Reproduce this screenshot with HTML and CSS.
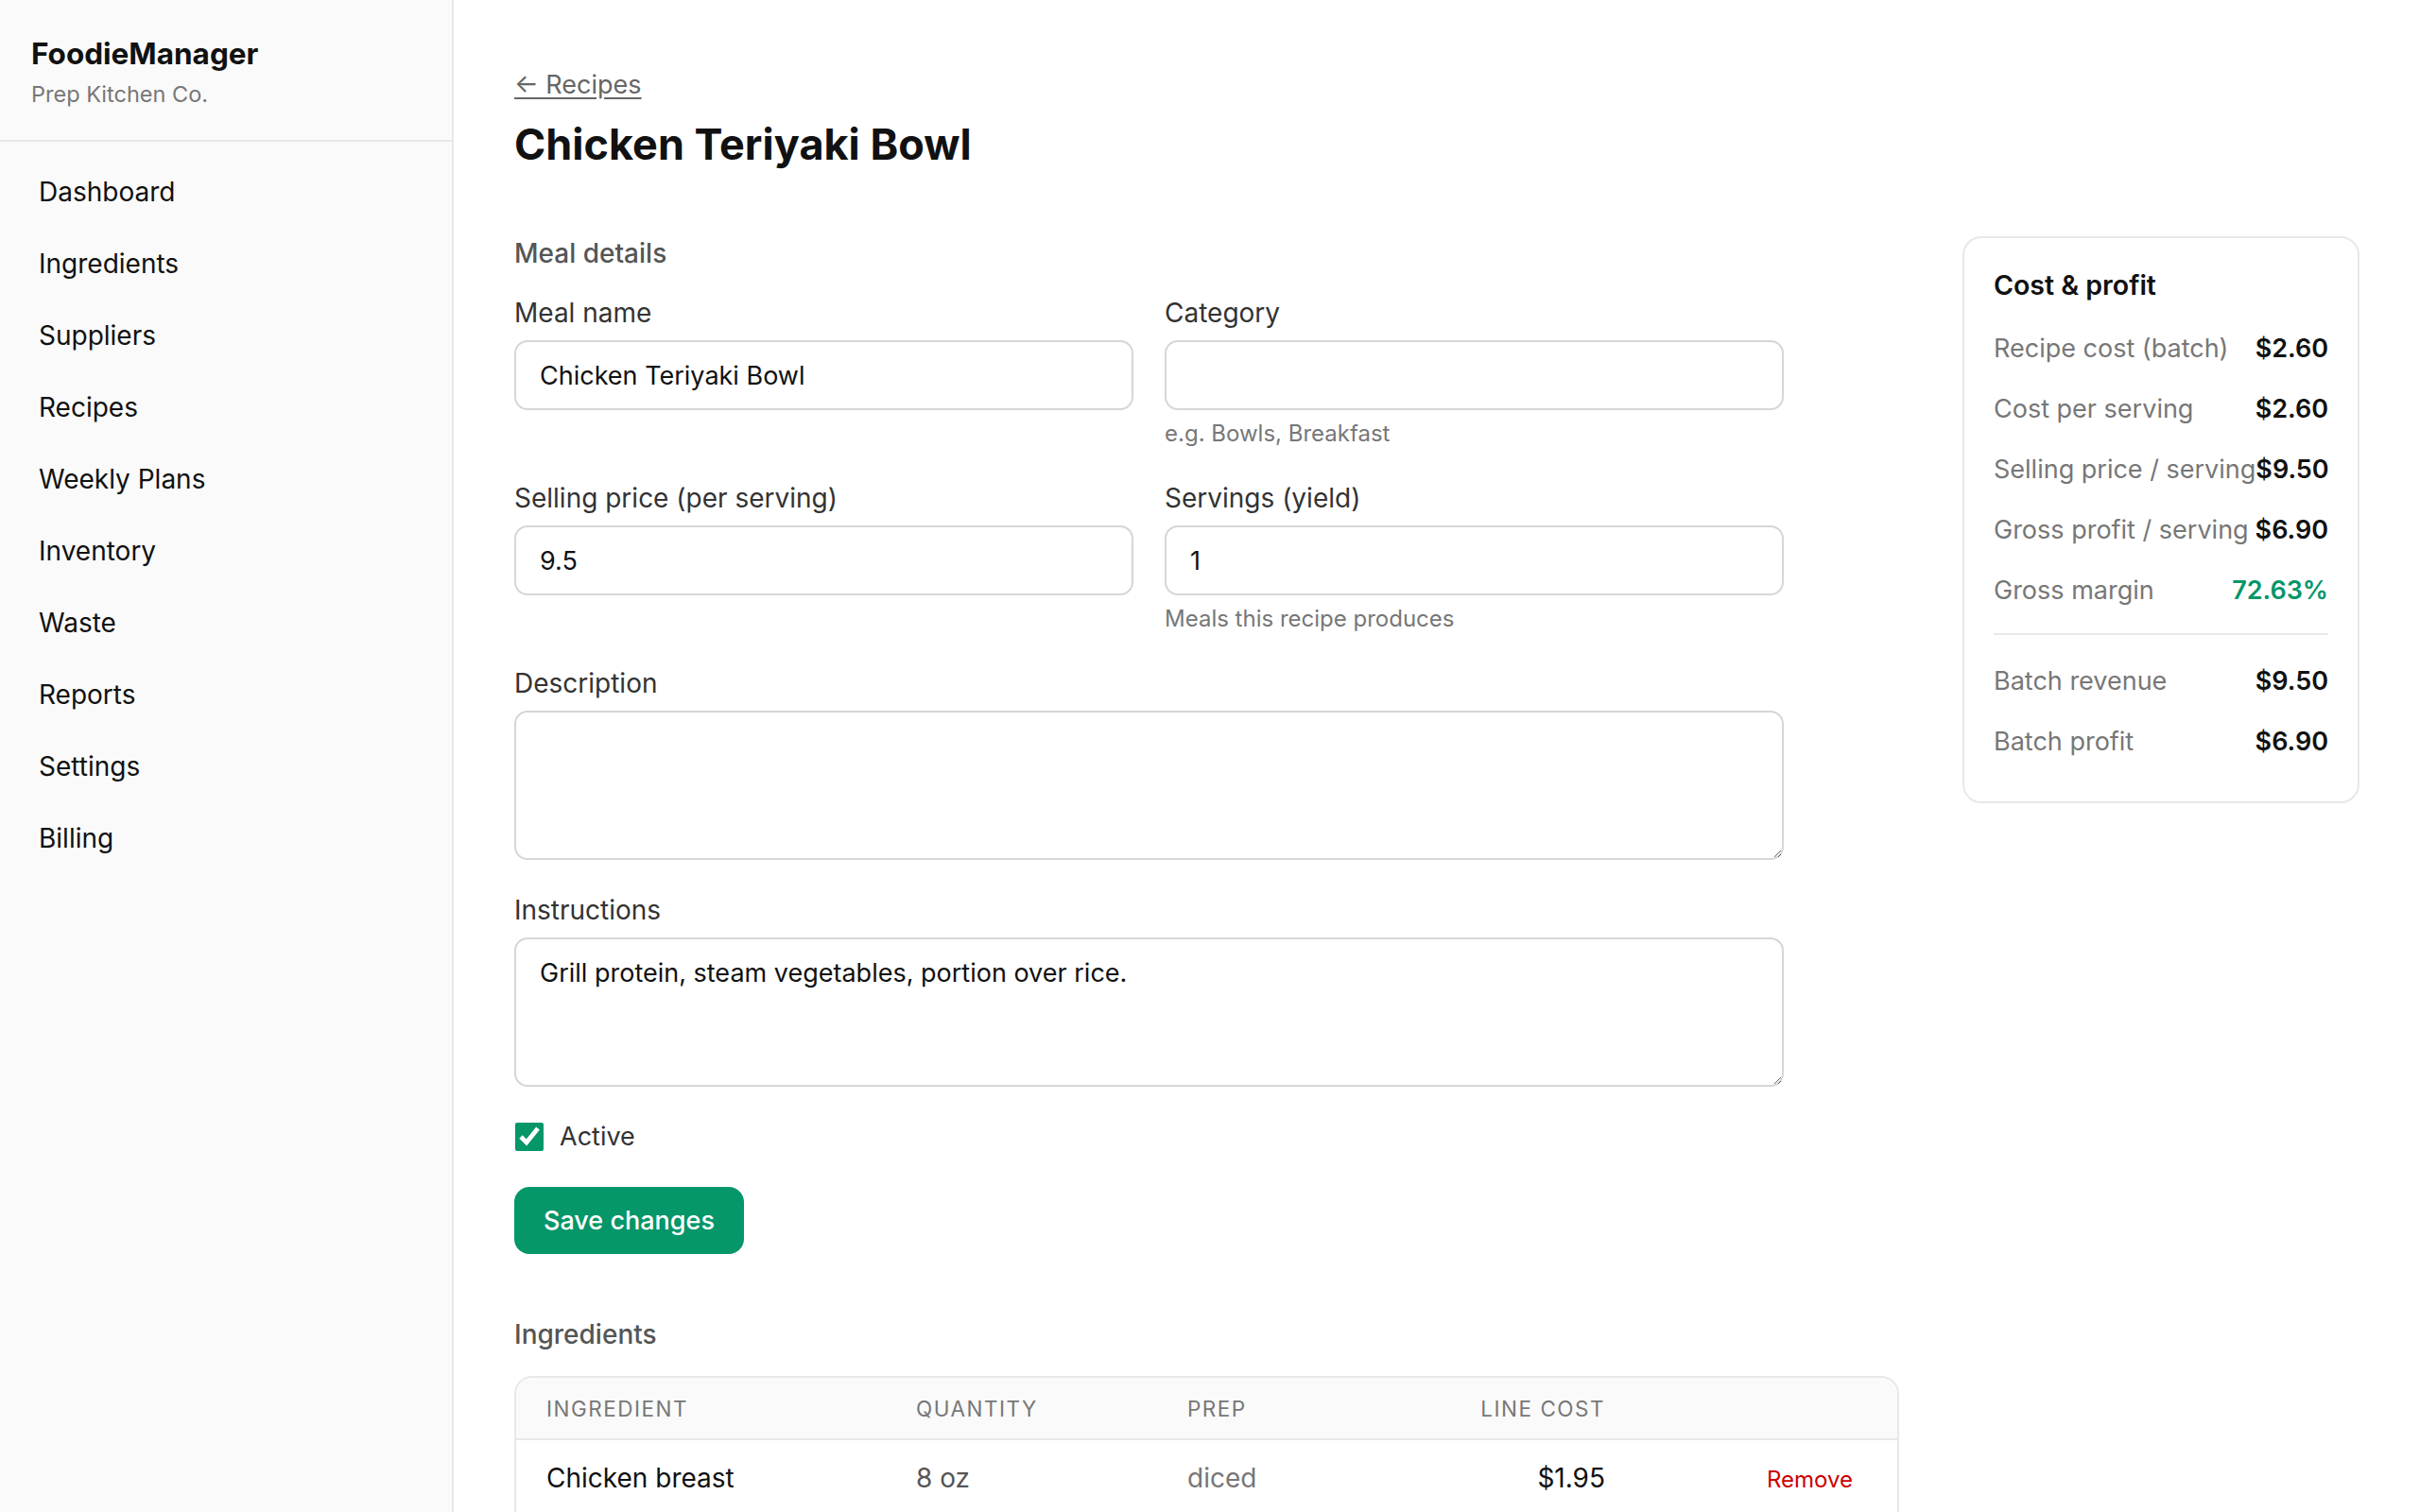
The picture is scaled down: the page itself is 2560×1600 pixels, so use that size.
FILE: index.html
```html
<!DOCTYPE html>
<html lang="en">
<head>
    <meta charset="UTF-8">
    <meta name="viewport" content="width=device-width, initial-scale=1.0">
    <title>Chicken Teriyaki Bowl - FoodieManager</title>
    <link rel="stylesheet" href="styles.css">
</head>
<body>

<!-- Sidebar -->
<aside class="sidebar">
    <div class="brand">
        <div class="brandName">FoodieManager</div>
        <div class="brandSub">Prep Kitchen Co.</div>
    </div>
    <nav class="nav">
        <a href="#">Dashboard</a>
        <a href="#">Ingredients</a>
        <a href="#">Suppliers</a>
        <a href="#">Recipes</a>
        <a href="#">Weekly Plans</a>
        <a href="#">Inventory</a>
        <a href="#">Waste</a>
        <a href="#">Reports</a>
        <a href="#">Settings</a>
        <a href="#">Billing</a>
    </nav>
</aside>

<!-- Main content -->
<main class="main">
    <a href="#" class="backLink">&larr; Recipes</a>
    <h1 class="pageTitle">Chicken Teriyaki Bowl</h1>

    <div class="layout">
        <div class="leftCol">
            <h2 class="sectionTitle">Meal details</h2>
            <form class="mealForm">
                <div class="fieldRow">
                    <div class="field">
                        <label>Meal name</label>
                        <input type="text" value="Chicken Teriyaki Bowl">
                    </div>
                    <div class="field">
                        <label>Category</label>
                        <input type="text" value="">
                        <span class="hint">e.g. Bowls, Breakfast</span>
                    </div>
                </div>
                <div class="fieldRow">
                    <div class="field">
                        <label>Selling price (per serving)</label>
                        <input type="text" value="9.5">
                    </div>
                    <div class="field">
                        <label>Servings (yield)</label>
                        <input type="text" value="1">
                        <span class="hint">Meals this recipe produces</span>
                    </div>
                </div>
                <div class="field">
                    <label>Description</label>
                    <textarea></textarea>
                </div>
                <div class="field">
                    <label>Instructions</label>
                    <textarea>Grill protein, steam vegetables, portion over rice.</textarea>
                </div>
                <label class="checkRow">
                    <input type="checkbox" checked>
                    <span>Active</span>
                </label>
                <div>
                    <button type="button" class="saveBtn">Save changes</button>
                </div>
            </form>

            <h2 class="sectionTitle ingredientsTitle">Ingredients</h2>
            <div class="tableWrap">
                <table class="ingTable">
                    <thead>
                        <tr>
                            <th class="colName">Ingredient</th>
                            <th class="colQty">Quantity</th>
                            <th class="colPrep">Prep</th>
                            <th class="colCost">Line cost</th>
                            <th class="colAction"></th>
                        </tr>
                    </thead>
                    <tbody>
                        <tr>
                            <td class="ingName">Chicken breast</td>
                            <td class="ingQty">8 oz</td>
                            <td class="ingPrep">diced</td>
                            <td class="colCost">$1.95</td>
                            <td class="colAction"><a href="#" class="removeLink">Remove</a></td>
                        </tr>
                        <tr>
                            <td class="ingName">Jasmine rice</td>
                            <td class="ingQty">1 cup</td>
                            <td class="ingPrep">steamed</td>
                            <td class="colCost">$0.40</td>
                            <td class="colAction"><a href="#" class="removeLink">Remove</a></td>
                        </tr>
                    </tbody>
                </table>
            </div>
        </div>

        <!-- Cost summary -->
        <aside class="costPanel">
            <h3 class="panelTitle">Cost &amp; profit</h3>
            <div class="costRow"><span class="costLabel">Recipe cost (batch)</span><span class="costValue">$2.60</span></div>
            <div class="costRow"><span class="costLabel">Cost per serving</span><span class="costValue">$2.60</span></div>
            <div class="costRow"><span class="costLabel">Selling price / serving</span><span class="costValue">$9.50</span></div>
            <div class="costRow"><span class="costLabel">Gross profit / serving</span><span class="costValue">$6.90</span></div>
            <div class="costRow"><span class="costLabel">Gross margin</span><span class="costValue positive">72.63%</span></div>
            <hr class="panelDivider">
            <div class="costRow"><span class="costLabel">Batch revenue</span><span class="costValue">$9.50</span></div>
            <div class="costRow"><span class="costLabel">Batch profit</span><span class="costValue">$6.90</span></div>
        </aside>
    </div>
</main>

</body>
</html>
```

FILE: styles.css
```css
/* Base */
* {
    box-sizing: border-box;
}

body {
    margin: 0;
    display: flex;
    min-height: 100vh;
    font-family: Inter, "Noto Sans", sans-serif;
    color: #111;
    background: #fff;
}

/* Sidebar */
.sidebar {
    width: 480px;
    flex-shrink: 0;
    background: #fafafa;
    border-right: 2px solid #e8e8e8;
}

.brand {
    padding: 38px 33px 34px;
    border-bottom: 2px solid #e8e8e8;
}

.brandName {
    font-size: 31.5px;
    font-weight: 700;
    line-height: 38px;
}

.brandSub {
    margin-top: 10px;
    font-size: 23.5px;
    line-height: 28px;
    color: #777;
}

.nav {
    padding: 15px 8px;
    display: flex;
    flex-direction: column;
}

.nav a {
    display: block;
    padding: 19px 33px;
    font-size: 28px;
    line-height: 38px;
    color: #111;
    text-decoration: none;
}

/* Main area */
.main {
    flex: 1;
    padding: 72px 64px 64px;
}

.backLink {
    display: inline-block;
    font-size: 27px;
    line-height: 36px;
    color: #666;
    text-decoration: underline;
    text-underline-offset: 4px;
}

.pageTitle {
    margin: 18px 0 70px;
    font-size: 45px;
    line-height: 54px;
    font-weight: 700;
}

.layout {
    display: grid;
    grid-template-columns: 1fr 420px;
    gap: 67px;
    align-items: start;
}

.sectionTitle {
    margin: 0 0 27px;
    font-size: 28px;
    line-height: 36px;
    font-weight: 500;
    color: #555;
}

.ingredientsTitle {
    margin: 67px 0 26px;
}

/* Form */
.mealForm {
    max-width: 1343px;
    display: flex;
    flex-direction: column;
    gap: 35px;
}

.fieldRow {
    display: grid;
    grid-template-columns: 1fr 1fr;
    gap: 33px;
}

.field {
    display: flex;
    flex-direction: column;
}

.field label {
    font-size: 28px;
    line-height: 36px;
    color: #333;
    margin-bottom: 11px;
}

.field input,
.field textarea {
    font-family: inherit;
    font-size: 27px;
    color: #111;
    border: 2px solid #d6d6d6;
    border-radius: 14px;
    background: #fff;
    padding: 0 25px;
}

.field input {
    height: 74px;
}

.field textarea {
    height: 158px;
    padding-top: 18px;
    line-height: 36px;
    resize: vertical;
}

.hint {
    margin-top: 10px;
    font-size: 24px;
    line-height: 30px;
    color: #777;
}

.checkRow {
    display: flex;
    align-items: center;
    gap: 17px;
    font-size: 27px;
    line-height: 36px;
    color: #333;
}

.checkRow input {
    width: 30px;
    height: 30px;
    margin: 0 0 0 1px;
    accent-color: #059669;
}

.saveBtn {
    height: 71px;
    padding: 0 31px;
    font-family: inherit;
    font-size: 27px;
    font-weight: 500;
    color: #fff;
    background: #059669;
    border: none;
    border-radius: 16px;
    cursor: pointer;
}

/* Ingredients table */
.tableWrap {
    border: 2px solid #e8e8e8;
    border-radius: 19px;
    overflow: hidden;
}

.ingTable {
    width: 100%;
    border-collapse: collapse;
    table-layout: fixed;
}

.ingTable th {
    background: #fafafa;
    height: 65px;
    padding: 0 32px;
    text-align: left;
    font-size: 22.5px;
    font-weight: 400;
    letter-spacing: 1.5px;
    text-transform: uppercase;
    color: #777;
    border-bottom: 2px solid #e8e8e8;
}

.ingTable td {
    height: 82px;
    padding: 0 32px;
    font-size: 28px;
    border-bottom: 2px solid #eee;
}

.colName { width: 391px; }
.colQty { width: 287px; }
.colPrep { width: 178px; }
.ingTable .colCost { width: 328px; text-align: right; }
.ingTable .colAction { text-align: right; padding-right: 47px; }

.ingName { color: #111; }
.ingQty { color: #555; }
.ingPrep { color: #777; }

.removeLink {
    font-size: 24px;
    color: #c00;
    text-decoration: none;
}

/* Cost panel */
.costPanel {
    border: 2px solid #e8e8e8;
    border-radius: 20px;
    padding: 31px 31px 44px;
}

.panelTitle {
    margin: 0 0 29px;
    font-size: 28.5px;
    line-height: 38px;
    font-weight: 600;
}

.costRow {
    display: flex;
    justify-content: space-between;
    font-size: 27px;
    line-height: 38px;
    margin-bottom: 26px;
    white-space: nowrap;
}

.costRow:last-child {
    margin-bottom: 0;
}

.costLabel {
    color: #777;
}

.costValue {
    flex-shrink: 0;
    font-weight: 600;
    color: #111;
}

.costValue.positive {
    color: #059669;
}

.panelDivider {
    border: none;
    border-top: 2px solid #e8e8e8;
    margin: 10px 0 30px;
}
```
